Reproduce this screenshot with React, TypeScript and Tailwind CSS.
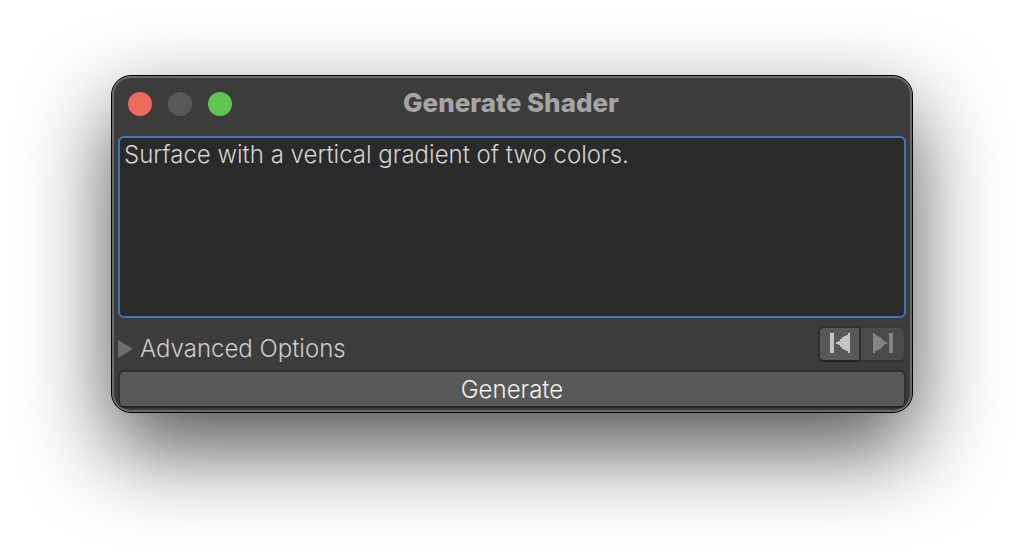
const font = "font-['Inter','Liberation_Sans',sans-serif]";

function PreviousIcon() {
  return (
    <svg className="h-5 w-5" viewBox="0 0 20 20" fill="currentColor" shapeRendering="crispEdges" aria-hidden="true">
      <path d="M0 0h4v20H0z" />
      <path d="M18 0h2v20h-2v-2h-2v-1h-2v-1h-2v-2h-2v-2H8v-1H6V9h2V8h2V6h2V4h2V3h2V2h2z" />
    </svg>
  );
}

function NextIcon() {
  return (
    <svg className="h-5 w-5" viewBox="0 0 20 20" fill="currentColor" shapeRendering="crispEdges" aria-hidden="true">
      <path d="M16 0h4v20h-4z" />
      <path d="M2 0H0v20h2v-2h2v-1h2v-1h2v-2h2v-2h2v-1h2V9h-2V8h-2V6H8V4H6V3H4V2H2z" />
    </svg>
  );
}

function TitleBar() {
  return (
    <header className="grid h-[52px] grid-cols-[1fr_auto_1fr] items-center pr-3 pl-2.5">
      <div className="flex gap-4">
        <button type="button" aria-label="Close" className="size-6 rounded-full bg-[#ed6a5e]" />
        <button type="button" aria-label="Minimize" disabled className="size-6 rounded-full bg-[#585858]" />
        <button type="button" aria-label="Zoom" className="size-6 rounded-full bg-[#61c454]" />
      </div>
      <h1 className="pb-0.5 text-[26px] leading-8 font-extrabold text-[#a5a5a5]">Generate Shader</h1>
    </header>
  );
}

export default function App() {
  return (
    <div className={`min-h-screen overflow-hidden bg-white px-[111px] py-[75px] ${font}`}>
      <main className="rounded-[20px] border border-black bg-[#3c3c3c] shadow-[0_36px_88px_rgba(0,0,0,0.68)]">
        <div className="rounded-[19px] border-2 border-[#696969] px-1 pb-0.5">
          <TitleBar />
          <textarea
            aria-label="Shader description"
            spellCheck={false}
            defaultValue="Surface with a vertical gradient of two colors."
            className="mt-1.5 block h-[182px] w-full resize-none rounded-md border-2 border-[#4376b8] bg-[#2a2a2a] px-1 py-px text-2xl leading-8 font-[330] text-[#d2d2d2] outline-none"
          />
          <div className="mt-2 flex items-center justify-between">
            <button type="button" aria-expanded="false" className="flex items-center gap-[7px] pt-2.5 text-2xl leading-[26px] font-[330] text-[#cccccc]">
              <svg className="h-[18px] w-[15px]" viewBox="0 0 15 18" aria-hidden="true">
                <path d="M0 0l15 9-15 9z" fill="#6e6e6e" />
              </svg>
              Advanced Options
            </button>
            <div className="flex h-9 rounded-md">
              <button type="button" aria-label="Previous" className="flex w-[43px] items-center justify-center rounded-l-md border-2 border-[#303030] border-b-[#242424] bg-[#585858] pb-0.5 text-[#c4c4c4]">
                <PreviousIcon />
              </button>
              <button type="button" aria-label="Next" disabled className="flex w-[45px] items-center justify-center rounded-r-md border-y-2 border-r-2 border-[#393939] border-b-[#353535] bg-[#4a4a4a] pb-0.5 text-[#848484]">
                <NextIcon />
              </button>
            </div>
          </div>
          <button type="button" className="mt-2 block h-[38px] w-full rounded-md border-2 border-[#303030] border-b-[#242424] bg-[#585858] pt-0.5 text-2xl leading-8 font-[330] text-[#f0f0f0]">
            Generate
          </button>
        </div>
      </main>
    </div>
  );
}
